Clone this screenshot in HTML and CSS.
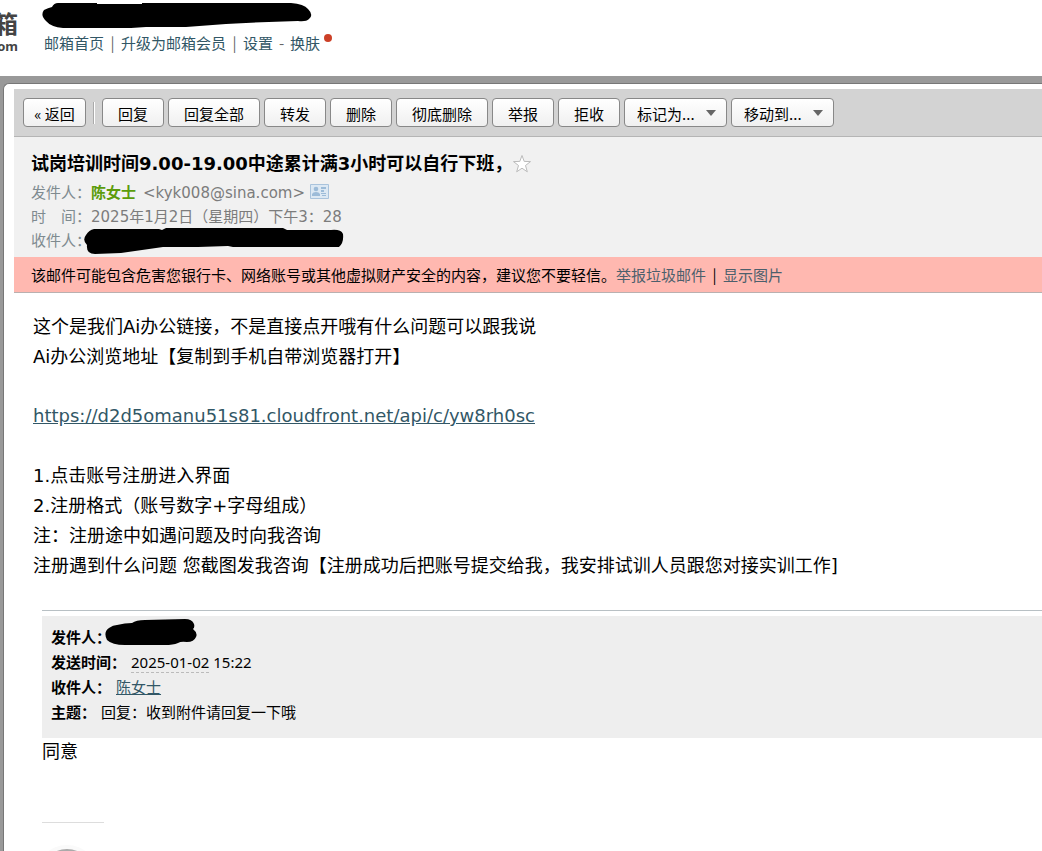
FILE: index.html
```html
<!DOCTYPE html>
<html lang="zh-CN">
<head>
<meta charset="utf-8">
<title>邮箱</title>
<link rel="stylesheet" href="styles.css">
</head>
<body>
<header class="topbar">
  <div class="logo"><span class="logo-name">箱</span><span class="logo-domain">com</span></div>
  <div class="account">
    <svg class="account-mask" width="272" height="29" viewBox="0 0 272 29" aria-hidden="true"><path d="M17 3H56V4H101V3H250Q263 4 267 9Q273 15 268 19Q265 22 257 21Q220 22 185 24L145 27H105L90 28H22Q10 27 5 21Q-1 15 3 10Q7 8 11 7Q13 3 17 3Z"/></svg>
    <nav class="account-nav">
      <a href="#">邮箱首页</a><span class="bar">|</span><a href="#">升级为邮箱会员</a><span class="bar">|</span><a href="#">设置</a><span class="bar">-</span><a href="#" class="skin">换肤</a>
    </nav>
  </div>
</header>
<main class="frame">
  <div class="panel">
    <div class="toolbar">
      <button class="btn back" type="button">« 返回</button>
      <span class="divider"></span>
      <button class="btn" type="button">回复</button>
      <button class="btn" type="button">回复全部</button>
      <button class="btn" type="button">转发</button>
      <button class="btn" type="button">删除</button>
      <button class="btn" type="button">彻底删除</button>
      <button class="btn" type="button">举报</button>
      <button class="btn" type="button">拒收</button>
      <select class="btn menu" aria-label="标记为"><option>标记为...</option></select>
      <select class="btn menu" aria-label="移动到"><option>移动到...</option></select>
    </div>
    <section class="mail-head">
      <div class="title-row">
        <h1>试岗培训时间9.00-19.00中途累计满3小时可以自行下班，</h1>
        <svg class="star" width="20" height="20" viewBox="0 0 20 20" aria-hidden="true"><path d="M10 1.5L12.2 7.4L18.5 7.6L13.5 11.5L15.3 17.8L10 14.2L4.7 17.8L6.5 11.5L1.5 7.6L7.8 7.4Z"/></svg>
      </div>
      <div class="meta"><span class="label">发件人：</span><span class="address"><b class="sender">陈女士</b>&lt;kyk008@sina.com&gt;</span>
        <svg class="card" width="19" height="15" viewBox="0 0 19 15" aria-hidden="true"><path d="M.5.5H18.5V14.5H.5Z" fill="#dce8f3" stroke="#a9c3dc"/><circle cx="6" cy="5" r="2.3" fill="#9cbbd8"/><path d="M2 12V10Q3 8 6 8T10 10V12ZM11 3H16V5H11ZM11 6H14V8H11ZM11 9H16V10H11ZM12 11H16V12H12Z" fill="#9cbbd8"/></svg>
      </div>
      <div class="meta"><span class="label">时　间：</span><span class="date">2025年1月2日（星期四）下午3：28</span></div>
      <div class="meta"><span class="label">收件人：</span><svg class="recipient-mask" width="262" height="28" viewBox="0 0 262 28" aria-hidden="true"><path d="M11 4H76L79 5L83 3H200L204 5H248Q258 4 260 9Q261 18 256 22H150L145 21L115 22H80L38 28L12 29Q3 29 4 20Q-1 15 3 10Q6 5 11 4Z"/></svg></div>
    </section>
    <div class="warning">该邮件可能包含危害您银行卡、网络账号或其他虚拟财产安全的内容，建议您不要轻信。<a href="#">举报垃圾邮件</a><span class="warning-bar">|</span><a href="#">显示图片</a></div>
    <article class="mail-body">
      <p>这个是我们Ai办公链接，不是直接点开哦有什么问题可以跟我说</p>
      <p>Ai办公浏览地址【复制到手机自带浏览器打开】</p>
      <p class="link-row"><a href="#">https://d2d5omanu51s81.cloudfront.net/api/c/yw8rh0sc</a></p>
      <p>1.点击账号注册进入界面</p>
      <p>2.注册格式（账号数字+字母组成）</p>
      <p>注：注册途中如遇问题及时向我咨询</p>
      <p>注册遇到什么问题 您截图发我咨询【注册成功后把账号提交给我，我安排试训人员跟您对接实训工作]</p>
    </article>
    <section class="quote">
      <div class="quote-head">
        <div class="quote-row"><b class="tight">发件人：</b><svg class="sender-mask" width="92" height="27" viewBox="0 0 92 27" aria-hidden="true"><path d="M12 6Q20 4 27 4Q31 1 40 1L80 0Q87 0 89 5Q90 8 88 10Q93 14 91 18Q89 23 82 23Q76 22 73 24Q68 26 60 26H20Q7 26 2 21Q-2 13 4 9Q8 6 12 6Z"/></svg></div>
        <div class="quote-row"><b>发送时间：</b><span><span class="day">2025-01-02</span> 15:22</span></div>
        <div class="quote-row"><b>收件人：</b><a href="#">陈女士</a></div>
        <div class="quote-row"><b>主题：</b><span>回复：收到附件请回复一下哦</span></div>
      </div>
      <p class="quote-text">同意</p>
      <hr class="signature-rule">
      <svg class="avatar" width="62" height="62" viewBox="0 0 62 62" aria-hidden="true"><circle cx="25" cy="31" r="31" fill="#fafafa"/><circle cx="25" cy="31" r="27" fill="#aaa"/></svg>
    </section>
  </div>
</main>
</body>
</html>
```
FILE: styles.css
```css
* { box-sizing: border-box; }
body {
  margin: 0;
  height: 100vh;
  overflow: hidden;
  display: flex;
  flex-direction: column;
  background: #fff;
  color: #000;
  font-family: "DejaVu Sans", "Noto Sans CJK SC", sans-serif;
  font-size: 15px;
}
h1, p { margin: 0; }
a { color: #325766; text-decoration: none; }
.topbar { flex: none; display: flex; height: 76px; }
.logo {
  width: 18px;
  margin-right: 23px;
  padding-top: 8px;
  overflow: hidden;
  display: flex;
  flex-direction: column;
  align-items: flex-end;
  color: #444;
  font-weight: bold;
}
.logo-name { font-size: 24px; line-height: 30px; font-family: "Noto Sans CJK SC", sans-serif; }
.logo-domain { font-size: 13px; line-height: 16px; font-family: "Noto Sans", sans-serif; }
.account { display: flex; flex-direction: column; }
.account-mask { display: block; }
.account-nav {
  display: flex;
  padding-left: 3px;
  line-height: 28px;
  font-family: "Noto Sans CJK SC", sans-serif;
}
.bar { width: 17px; text-align: center; color: #666; }
.skin { position: relative; }
.skin::after {
  content: "";
  position: absolute;
  top: 5px;
  right: -12px;
  width: 8px;
  height: 8px;
  border-radius: 50%;
  background: #cc4027;
}
.frame {
  flex: 1;
  min-height: 0;
  display: flex;
  padding: 7px 0 0 3px;
  background: #999;
}
.panel {
  flex: 1;
  min-width: 0;
  padding: 5px 0 0 10px;
  background: #fff;
  border: 1px solid #777;
  border-width: 1px 0 0 1px;
  border-top-left-radius: 6px;
}
.toolbar {
  display: flex;
  align-items: center;
  gap: 4px;
  height: 48px;
  padding: 0 9px;
  background: #d3d3d3;
  border-bottom: 1px solid #b5b5b5;
}
.btn {
  flex: none;
  height: 29px;
  padding: 2px 15px 0;
  border: 1px solid #888;
  border-radius: 4px;
  background: linear-gradient(#fff, #f0f0f0);
  color: #000;
  font: 15px "Noto Sans CJK SC", sans-serif;
}
.back { padding: 2px 8px 0; width: 63px; white-space: nowrap; }
.divider { width: 2px; height: 22px; margin: 0 3px; border-left: 1px solid #aaa; background: #fff; }
.menu {
  appearance: none;
  width: 103px;
  padding: 2px 12px 0;
  background: url("data:image/svg+xml,%3Csvg xmlns='http://www.w3.org/2000/svg' width='10' height='6'%3E%3Cpath d='M0 0H10L5 6Z' fill='%23666'/%3E%3C/svg%3E") no-repeat right 10px center, linear-gradient(#fff, #f0f0f0);
}
.mail-head { height: 120px; padding: 12px 17px 0; background: #f1f1f1; }
.title-row { display: flex; align-items: center; height: 30px; }
h1 { font-size: 18px; line-height: 28px; white-space: nowrap; }
.star { flex: none; fill: #fff; stroke: #bbb; }
.meta { display: flex; align-items: center; height: 24px; color: #7c7c7c; }
.label { flex: none; width: 60px; font-family: "Noto Sans CJK SC", sans-serif; color: #7f8b90; }
.sender { color: #5c9c0b; margin-right: 7px; }
.card { margin-left: 5px; }
.recipient-mask { flex: none; margin-left: -8px; overflow: visible; }
.warning {
  height: 36px;
  padding-left: 17px;
  line-height: 36px;
  background: #ffb8b0;
  border-bottom: 1px solid #b9b0b0;
  font-family: "Noto Sans CJK SC", sans-serif;
  white-space: nowrap;
}
.warning a { color: #4c5f6c; }
.warning-bar { display: inline-block; width: 17px; text-align: center; }
.mail-body { padding: 19px 19px 0; font-size: 18px; line-height: 30px; white-space: nowrap; }
.mail-body .link-row { padding: 29px 0 30px; }
.mail-body a { text-decoration: underline; }
.quote { margin: 29px 0 0 28px; padding-top: 5px; border-top: 1px solid #b8c0c4; }
.quote-head { padding: 8px 9px 14px; background: #eee; }
.quote-row {
  display: flex;
  align-items: center;
  gap: 5px;
  height: 25px;
  font-family: "Noto Sans", "Noto Sans CJK SC", sans-serif;
}
.quote-row a { text-decoration: underline; }
.tight { width: 49px; white-space: nowrap; }
.sender-mask { flex: none; margin-bottom: 8px; }
.day { border-bottom: 1px dashed #bbb; }
.quote-text { font-size: 18px; line-height: 28px; }
.signature-rule { width: 62px; margin: 56px 0 22px; border: 0; border-top: 1px solid #ddd; }
.avatar { display: block; }
```
